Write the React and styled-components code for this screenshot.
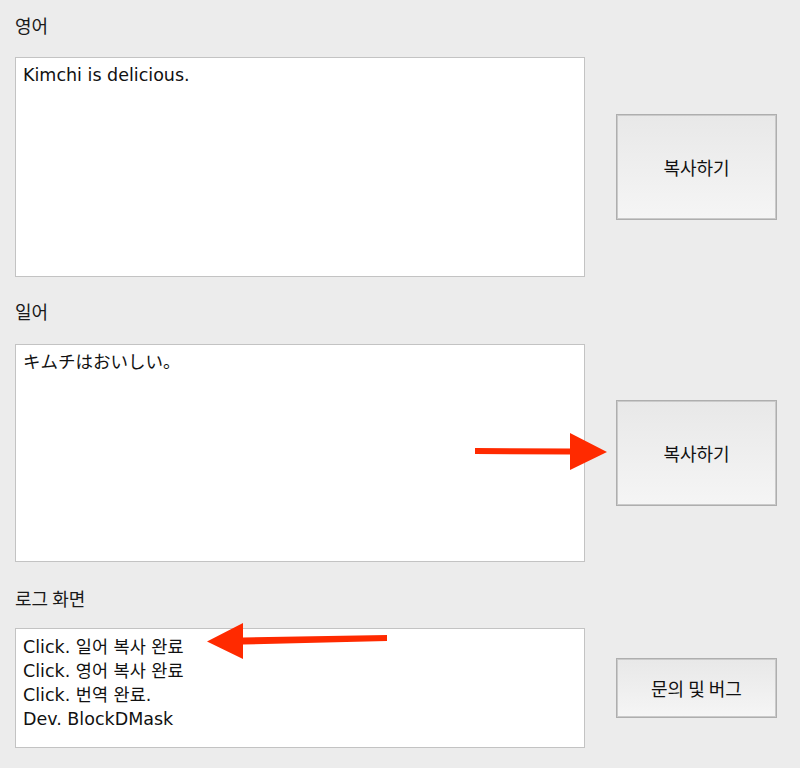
import React from 'react';
import styled, { createGlobalStyle } from 'styled-components';

const sections = [
  { label: '영어', text: 'Kimchi is delicious.', top: 0, labelGap: 21, height: 220, pad: 5, button: '복사하기', buttonHeight: 106 },
  { label: '일어', text: 'キムチはおいしい。', top: 23, labelGap: 22, height: 218, pad: 5, button: '복사하기', buttonHeight: 106 },
  {
    label: '로그 화면',
    text: 'Click. 일어 복사 완료\nClick. 영어 복사 완료\nClick. 번역 완료.\nDev. BlockDMask',
    top: 25,
    labelGap: 19,
    height: 120,
    pad: 6,
    button: '문의 및 버그',
    buttonHeight: 60,
  },
];

const App = () => {
  return (
    <>
      <GlobalStyles />
      <Page>
        {sections.map((s, i) => (
          <Section key={i} top={s.top}>
            <Label gap={s.labelGap}>{s.label}</Label>
            <Row>
              <TextBox h={s.height} pad={s.pad}>{s.text}</TextBox>
              <ButtonCol>
                <Button h={s.buttonHeight}>{s.button}</Button>
              </ButtonCol>
            </Row>
          </Section>
        ))}
        <Arrow viewBox="0 0 140 40" style={{ left: 472, top: 432 }} width="140" height="40">
          <polygon points="3,16 98,16.5 98,1 135,20 98,38 98,22.5 3,22" fill="#ff2a00" />
        </Arrow>
        <Arrow viewBox="0 0 185 42" style={{ left: 205, top: 620 }} width="185" height="42">
          <polygon points="2,21.5 38,3 38,17.5 182,15 182,21 38,24.5 38,39" fill="#ff2a00" />
        </Arrow>
      </Page>
    </>
  );
};

export default App;

const GlobalStyles = createGlobalStyle`
* {
  margin: 0;
  padding: 0;
  box-sizing: border-box;
}
html, body {
  background: #ececec;
}
body {
  font-family: 'Noto Sans CJK KR', 'Noto Sans CJK JP', sans-serif;
}
`;

const Page = styled.div`
  position: relative;
  width: 800px;
  height: 768px;
  padding: 14px 0 0 15px;
  background: #ececec;
  overflow: hidden;
`;

const Section = styled.section`
  display: flex;
  flex-direction: column;
  margin-top: ${({ top }) => top}px;
`;

const Label = styled.div`
  font-family: 'Noto Sans CJK KR', sans-serif;
  font-size: 18px;
  line-height: 22px;
  color: #1a1a1a;
  margin-bottom: ${({ gap }) => gap}px;
`;

const Row = styled.div`
  display: flex;
  align-items: center;
`;

const TextBox = styled.div`
  width: 570px;
  height: ${({ h }) => h}px;
  background: #fff;
  border: 1px solid #c3c3c3;
  padding: ${({ pad }) => pad}px 7px 0;
  font-family: 'DejaVu Sans', 'Noto Sans CJK KR', 'Noto Sans CJK JP', sans-serif;
  font-size: 17.5px;
  line-height: 24px;
  color: #111;
  white-space: pre-wrap;
`;

const ButtonCol = styled.div`
  margin-left: 31px;
  display: flex;
  align-items: center;
`;

const Button = styled.button`
  width: 161px;
  height: ${({ h }) => h}px;
  border: 1px solid #aeaeae;
  box-shadow: inset 0 0 0 1px #cacaca;
  background: linear-gradient(to bottom, #e8e8e8, #f5f5f5);
  font-family: 'Noto Sans CJK KR', sans-serif;
  font-size: 18px;
  color: #111;
  cursor: pointer;
`;

const Arrow = styled.svg`
  position: absolute;
  pointer-events: none;
`;
